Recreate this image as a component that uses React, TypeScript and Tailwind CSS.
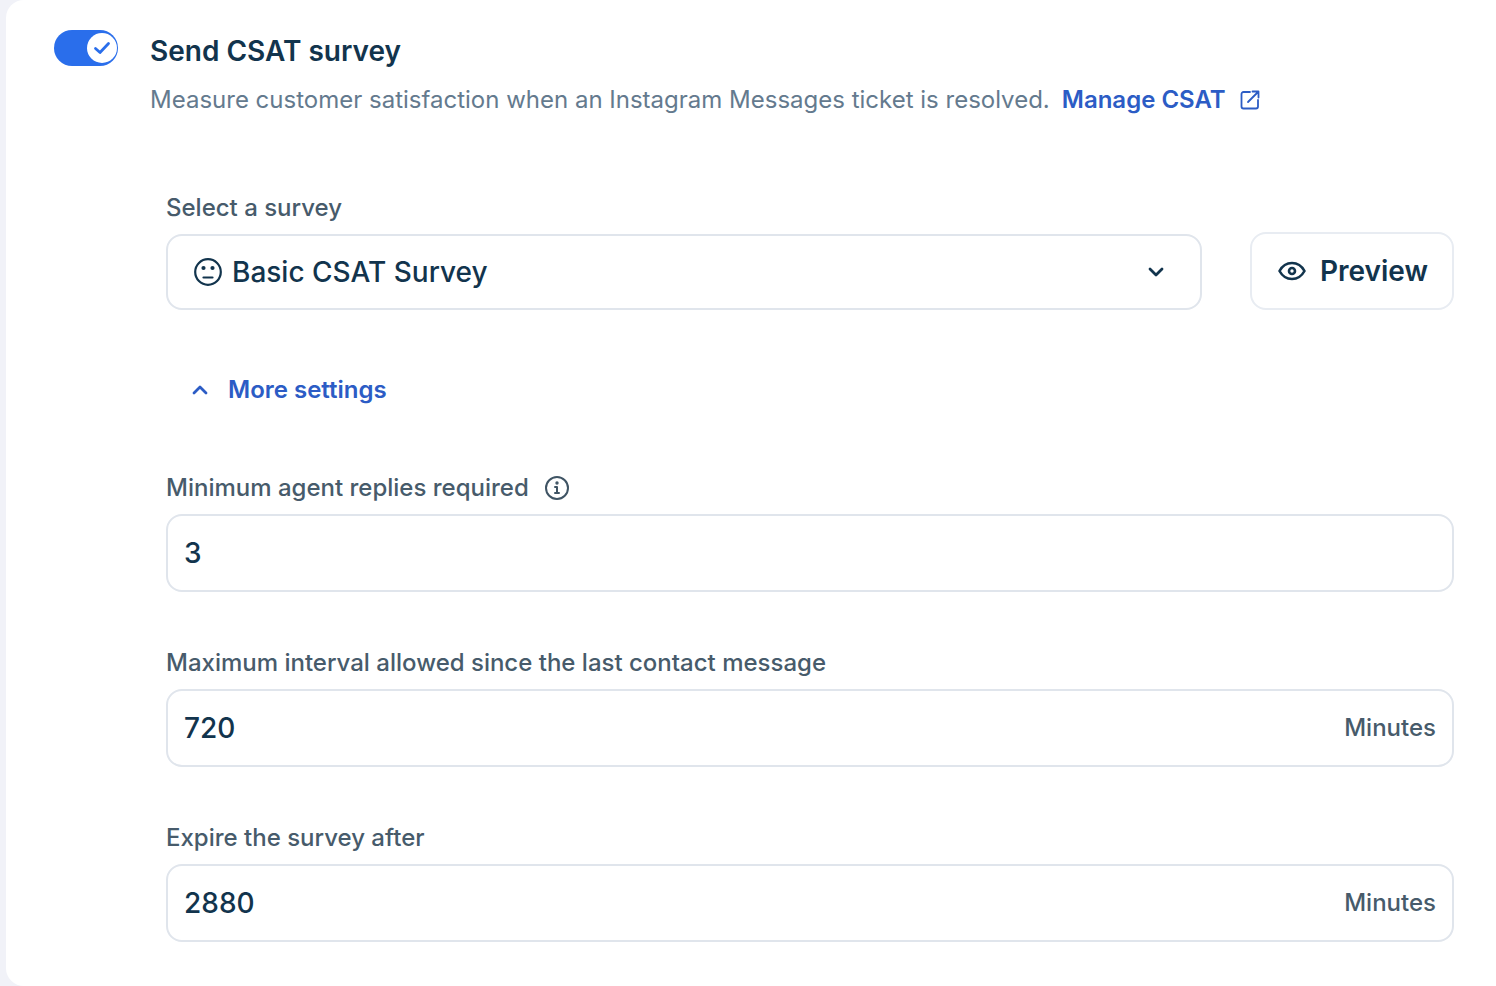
import React from "react";

const font = { fontFamily: "Inter, sans-serif" };

function Chevron({ up, className }: { up?: boolean; className: string }) {
  return (
    <svg viewBox="0 0 24 24" fill="none" stroke="currentColor" strokeWidth="2.8" strokeLinecap="round" strokeLinejoin="round" className={className}>
      <path d={up ? "M6 15l6-6 6 6" : "M6 9l6 6 6-6"} />
    </svg>
  );
}

function Field({ label, value, unit, info, top }: { label: string; value: string; unit?: string; info?: boolean; top: string }) {
  return (
    <div className={top}>
      <div className="flex items-center h-[28px] text-[24px] font-medium leading-[28px] text-[#475b6b]">
        <span>{label}</span>
        {info && (
          <svg viewBox="0 0 26 26" fill="none" stroke="#3f5464" strokeWidth="2" strokeLinecap="round" strokeLinejoin="round" className="w-[26px] h-[26px] ml-[15px]">
            <circle cx="13" cy="13" r="11" />
            <path d="M11 12h2v6M11 18h4" />
            <circle cx="13" cy="8" r="0.7" fill="#3f5464" />
          </svg>
        )}
      </div>
      <div className="mt-[12px] h-[78px] rounded-[16px] border-2 border-[#e0e5ec] bg-white flex items-center justify-between pl-[16px] pr-[16px]">
        <span className="text-[28px] font-medium text-[#12344d]">{value}</span>
        {unit && <span className="text-[24px] font-medium text-[#475b6b]">{unit}</span>}
      </div>
    </div>
  );
}

export default function App() {
  return (
    <div style={font} className="h-[986px] w-[1496px] overflow-hidden bg-[#f1f2f8] pl-[6px]">
      <div className="h-full bg-white rounded-l-[18px] pt-[30px] pl-[48px] pr-[42px]">
        <div className="flex items-start">
          <div className="w-[64px] h-[36px] rounded-full bg-[#2a6eeb] flex items-center justify-end pr-[1px] shrink-0">
            <div className="w-[30px] h-[30px] rounded-full bg-white flex items-center justify-center">
              <svg viewBox="0 0 20 20" fill="none" stroke="#2a6eeb" strokeWidth="2.8" strokeLinecap="round" strokeLinejoin="round" className="w-[20px] h-[20px]">
                <path d="M3.500 10.500l4.500 4 8.500-9" />
              </svg>
            </div>
          </div>
          <div className="ml-[32px] -mt-[1px]">
            <div className="text-[28px] leading-[44px] h-[44px] font-semibold text-[#12344d]">Send CSAT survey</div>
            <div className="mt-[12px] flex items-center h-[30px] text-[24px] leading-[30px] whitespace-nowrap">
              <span className="text-[#647a8e]">Measure customer satisfaction when an Instagram Messages ticket is resolved.</span>
              <span className="ml-[12px] font-semibold text-[#2c5cc5]">Manage CSAT</span>
              <svg viewBox="0 0 20 20" fill="none" stroke="#2c5cc5" strokeWidth="1.8" strokeLinecap="round" strokeLinejoin="round" className="ml-[14px] w-[20px] h-[20px]">
                <path d="M10 2H3.500A2 2 0 0 0 1.500 4v12.500a2 2 0 0 0 2 2H16a2 2 0 0 0 2-2V10" />
                <path d="M8 12l10-10M12.500 1.500h6v6" />
              </svg>
            </div>
          </div>
        </div>

        <div className="ml-[112px] mt-[79px]">
          <div className="h-[28px] text-[24px] font-medium leading-[28px] text-[#475b6b]">Select a survey</div>
          <div className="flex items-end mt-[10px]">
            <div className="w-[1036px] h-[76px] rounded-[16px] border-2 border-[#e0e5ec] flex items-center pl-[26px] pr-[32px]">
              <svg viewBox="0 0 28 28" fill="none" stroke="#12344d" strokeWidth="2.2" strokeLinecap="round" className="w-[28px] h-[28px]">
                <circle cx="14" cy="14" r="12.800" />
                <path d="M9.500 19.500h9" />
                <circle cx="9.500" cy="10" r="1" fill="#12344d" />
                <circle cx="18.500" cy="10" r="1" fill="#12344d" />
              </svg>
              <span className="ml-[10px] text-[28px] font-medium text-[#12344d]">Basic CSAT Survey</span>
              <Chevron className="ml-auto w-[24px] h-[24px] text-[#12344d]" />
            </div>
            <div className="ml-[48px] w-[204px] h-[78px] rounded-[16px] border-2 border-[#e8ecf2] flex items-center justify-center gap-[14px] pl-[2px]">
              <svg viewBox="0 0 28 20" fill="none" stroke="#12344d" strokeWidth="2.600" strokeLinecap="round" strokeLinejoin="round" className="w-[28px] h-[20px]">
                <path d="M1.500 10C4.500 4.500 9 2 14 2s9.500 2.500 12.500 8c-3 5.500-7.500 8-12.500 8S4.500 15.500 1.500 10z" />
                <circle cx="14" cy="10" r="3" />
              </svg>
              <span className="text-[28px] font-semibold text-[#12344d]">Preview</span>
            </div>
          </div>

          <div className="flex items-center mt-[64px] h-[32px] pl-[22px]">
            <Chevron up className="w-[24px] h-[24px] text-[#2c5cc5]" />
            <span className="ml-[16px] text-[24px] font-semibold text-[#2c5cc5]">More settings</span>
          </div>

          <Field top="mt-[68px]" label="Minimum agent replies required" value="3" info />
          <Field top="mt-[57px]" label="Maximum interval allowed since the last contact message" value="720" unit="Minutes" />
          <Field top="mt-[57px]" label="Expire the survey after" value="2880" unit="Minutes" />
        </div>
      </div>
    </div>
  );
}
